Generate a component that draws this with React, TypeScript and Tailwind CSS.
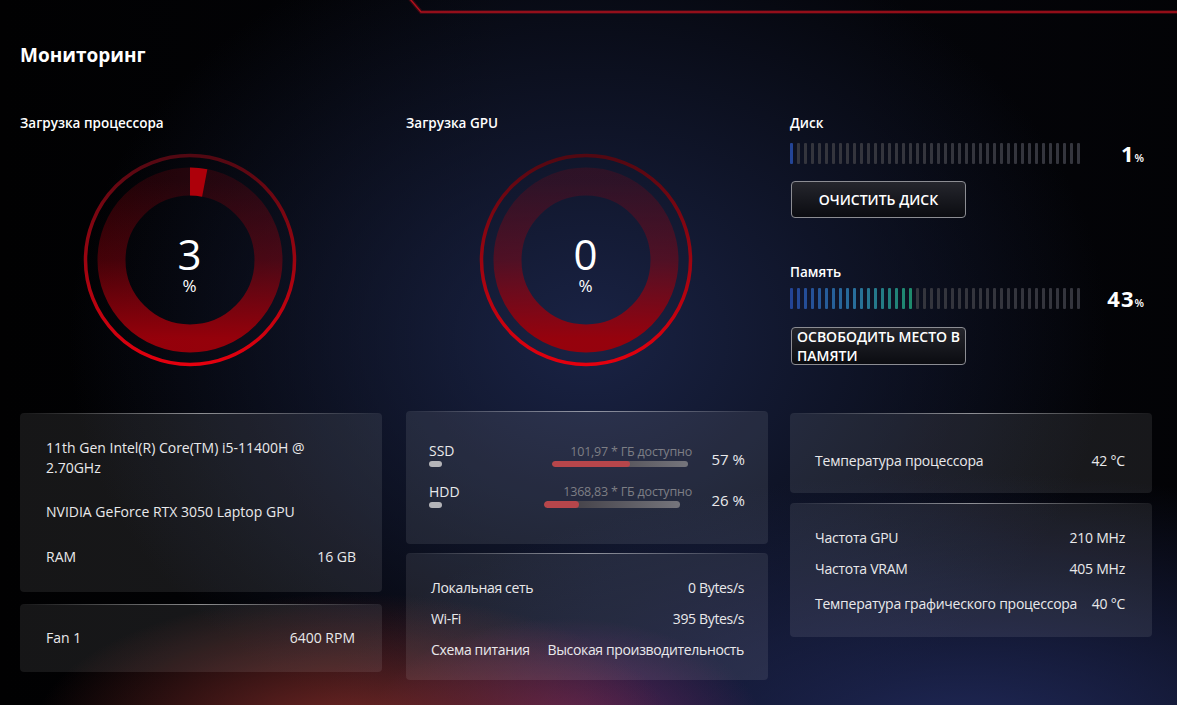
import React from 'react';

const font = "font-['Open_Sans','Noto_Sans',sans-serif]";

const Card = ({ className = '', pad = '', children }: { className?: string; pad?: string; children: React.ReactNode }) => (
  <div className={`rounded-[4px] bg-white/[0.085] ${className}`}>
    <div className="h-px bg-linear-to-r from-transparent via-white/50 to-transparent" />
    <div className={pad}>{children}</div>
  </div>
);

const Gauge = ({ value, id }: { value: number; id: string }) => {
  const r = 78.5;
  const c = 2 * Math.PI * r;
  const len = (c * value) / 100;
  return (
    <div className="relative h-[220px] w-[220px]">
      <svg width="220" height="220" viewBox="0 0 220 220">
        <defs>
          <linearGradient id={`${id}-outer`} x1="0" y1="0" x2="0" y2="1">
            <stop offset="0" stopColor="#520812" />
            <stop offset="1" stopColor="#e4000e" />
          </linearGradient>
          <linearGradient id={`${id}-ring`} x1="0" y1="0" x2="0" y2="1">
            <stop offset="0" stopColor="#a0000c" stopOpacity="0.2" />
            <stop offset="0.5" stopColor="#a0000c" stopOpacity="0.42" />
            <stop offset="1" stopColor="#9c000a" stopOpacity="0.95" />
          </linearGradient>
        </defs>
        <circle cx="110" cy="110" r="104.5" fill="none" stroke={`url(#${id}-outer)`} strokeWidth="3.5" />
        <circle cx="110" cy="110" r={r} fill="none" stroke={`url(#${id}-ring)`} strokeWidth="28" />
        {value > 0 && (
          <circle
            cx="110"
            cy="110"
            r={r}
            fill="none"
            stroke="#ad000a"
            strokeWidth="28"
            strokeDasharray={`${len} ${c}`}
            transform="rotate(-90 110 110)"
          />
        )}
      </svg>
      <div className="absolute inset-0 flex items-center justify-center pt-[5px] text-white">
        <div className="text-center text-[17px] leading-[18px]">
          <span className="block text-[42px] leading-[46px]">{value}</span>
          %
        </div>
      </div>
    </div>
  );
};

const mix = (a: number[], b: number[], t: number) => a.map((v, i) => Math.round(v + (b[i] - v) * t));

const segColor = (i: number, on: number) => {
  const t = on > 1 ? i / (on - 1) : 0;
  const s0 = [35, 68, 150];
  const s1 = [40, 112, 155];
  const s2 = [30, 138, 108];
  const c = t < 0.55 ? mix(s0, s1, t / 0.55) : mix(s1, s2, (t - 0.55) / 0.45);
  return `rgb(${c[0]},${c[1]},${c[2]})`;
};

const Segments = ({ percent }: { percent: number }) => {
  const total = 42;
  const on = Math.max(1, Math.round((percent / 100) * total));
  return (
    <div className="flex gap-[4px]">
      {Array.from({ length: total }).map((_, i) => (
        <span
          key={i}
          className="h-[21px] w-[3px] rounded-[1px]"
          style={{ backgroundColor: i < on ? segColor(i, on) : '#34353d' }}
        />
      ))}
    </div>
  );
};

const UsageBar = ({ percent }: { percent: number }) => (
  <div className="mt-[10px] flex h-[21px] items-end">
    <Segments percent={percent} />
    <div className="ml-auto mr-[8px] flex items-baseline leading-none text-white">
      <span className="text-[22px] font-bold tracking-[1px]">{percent}</span>
      <span className="text-[11px] font-semibold">%</span>
    </div>
  </div>
);

const drives = [
  { name: 'SSD', free: '101,97 * ГБ доступно', pct: 57, mr: 'mr-[4px]' },
  { name: 'HDD', free: '1368,83 * ГБ доступно', pct: 26, mr: 'mr-[12px]' },
];

const network = [
  { label: 'Локальная сеть', value: '0 Bytes/s' },
  { label: 'Wi-Fi', value: '395 Bytes/s' },
  { label: 'Схема питания', value: 'Высокая производительность' },
];

export default function App() {
  return (
    <div
      className={`relative h-[705px] w-full overflow-hidden bg-[#04050a] bg-[image:radial-gradient(ellipse_320px_140px_at_30%_104%,rgba(118,40,38,1),transparent),radial-gradient(ellipse_200px_115px_at_48%_104%,rgba(110,40,100,0.9),transparent),radial-gradient(ellipse_650px_260px_at_82%_104%,rgba(36,46,100,0.85),transparent),radial-gradient(ellipse_520px_420px_at_50%_48%,rgba(28,38,75,0.9),transparent),linear-gradient(90deg,#010102_0%,rgba(1,1,2,0.6)_25%,transparent_45%,transparent_70%,rgba(2,2,4,0.7)_100%)] ${font} text-[14px] text-[#e9e9eb]`}
    >
      {/* decorative frame line */}
      <svg className="pointer-events-none absolute left-0 top-0" width="1177" height="20">
        <polyline points="410,-1 421,12 1177,12" fill="none" stroke="#c0101c" strokeOpacity="0.25" strokeWidth="4" />
        <polyline points="410,-1 421,12 1177,12" fill="none" stroke="#b3101c" strokeWidth="1.4" />
      </svg>

      <div className="px-[20px] pt-[44px]">
        <h1 className="text-[19px] font-bold leading-[22px] text-white">Мониторинг</h1>

        <div className="mt-[47px] flex">
          {/* CPU column */}
          <div className="w-[362px]">
            <div className="text-[13.5px] font-semibold leading-[20px] text-white">Загрузка процессора</div>
            <div className="ml-[59.5px] mt-[17px]">
              <Gauge value={3} id="cpu" />
            </div>
            <Card className="mt-[43px]" pad="px-[26px] pb-[24.5px] pt-[23.5px]">
              <div className="leading-[20.5px]">
                11th Gen Intel(R) Core(TM) i5-11400H @<br />
                2.70GHz
              </div>
              <div className="mt-[23px] leading-[20px]">NVIDIA GeForce RTX 3050 Laptop GPU</div>
              <div className="mt-[25.5px] flex justify-between leading-[20px]">
                <span>RAM</span>
                <span>16 GB</span>
              </div>
            </Card>
            <Card className="mt-[12px]" pad="flex justify-between pl-[26px] pr-[27px] py-[23.5px] leading-[20px]">
              <span>Fan 1</span>
              <span>6400 RPM</span>
            </Card>
          </div>

          {/* GPU column */}
          <div className="ml-[24px] w-[362px]">
            <div className="text-[13.5px] font-semibold leading-[20px] text-white">Загрузка GPU</div>
            <div className="ml-[69.5px] mt-[17px]">
              <Gauge value={0} id="gpu" />
            </div>
            <Card className="mt-[41px]" pad="pl-[23px] pr-[23px] pt-[29px] pb-[36.5px]">
              <div className="flex flex-col gap-[14.5px]">
                {drives.map((d) => (
                  <div key={d.name} className="flex items-end">
                    <div className="flex flex-col">
                      <span className="leading-[20px]">{d.name}</span>
                      <span className="h-[6px] w-[13px] rounded-full bg-[#b4b4b8]" />
                    </div>
                    <div className="ml-auto flex flex-col items-end">
                      <span className="text-[12.5px] leading-[16px] tracking-[-0.2px] text-[#7e7f85]">{d.free}</span>
                      <div
                        className={`mt-[1px] h-[6.5px] w-[136px] overflow-hidden rounded-full bg-linear-to-r from-[#39363d] to-[#75757c] ${d.mr}`}
                      >
                        <div className="h-full rounded-full bg-[#b7464b]" style={{ width: `${d.pct}%` }} />
                      </div>
                    </div>
                    <span className="mb-[-2px] w-[53px] text-right text-[15px] leading-[20px]">{d.pct} %</span>
                  </div>
                ))}
              </div>
            </Card>
            <Card className="mt-[9px]" pad="pl-[25px] pr-[24px] pt-[24px] pb-[20px]">
              <div className="flex flex-col gap-[11px] leading-[20px] tracking-[-0.35px]">
                {network.map((n) => (
                  <div key={n.label} className="flex justify-between">
                    <span>{n.label}</span>
                    <span>{n.value}</span>
                  </div>
                ))}
              </div>
            </Card>
          </div>

          {/* Disk / memory column */}
          <div className="ml-[22px] w-[362px]">
            <div className="text-[13.5px] font-semibold leading-[20px] text-white">Диск</div>
            <UsageBar percent={1} />
            <button className="ml-[1px] mt-[17px] flex h-[37px] w-[175px] items-center justify-center rounded-[4px] border border-[#8c8d93] bg-linear-to-b from-[#25262d] to-[#0b0c11] text-[14px] font-semibold text-white">
              ОЧИСТИТЬ ДИСК
            </button>

            <div className="mt-[43.5px] text-[13.5px] font-semibold leading-[20px] text-white">Память</div>
            <div className="-mt-[3.5px]">
              <UsageBar percent={43} />
            </div>
            <button className="ml-[1px] mt-[18px] block h-[38px] w-[175px] rounded-[4px] border border-[#8c8d93] bg-linear-to-b from-[#25262d] to-[#0b0c11] px-[5px] text-left text-[14px] font-semibold leading-[18.5px] text-white">
              ОСВОБОДИТЬ МЕСТО В<br />
              ПАМЯТИ
            </button>

            <Card className="mt-[48px]" pad="flex justify-between pl-[25px] pr-[27px] pt-[37px] pb-[22px] leading-[20px] tracking-[-0.2px]">
              <span>Температура процессора</span>
              <span>42 °C</span>
            </Card>
            <Card className="mt-[10px]" pad="pl-[25px] pr-[27px] pt-[23.5px] pb-[23.5px] leading-[20px] tracking-[-0.25px]">
              <div className="flex justify-between">
                <span>Частота GPU</span>
                <span>210 MHz</span>
              </div>
              <div className="mt-[11px] flex justify-between">
                <span>Частота VRAM</span>
                <span>405 MHz</span>
              </div>
              <div className="mt-[15px] flex justify-between">
                <span>Температура графического процессора</span>
                <span>40 °C</span>
              </div>
            </Card>
          </div>
        </div>
      </div>
    </div>
  );
}
